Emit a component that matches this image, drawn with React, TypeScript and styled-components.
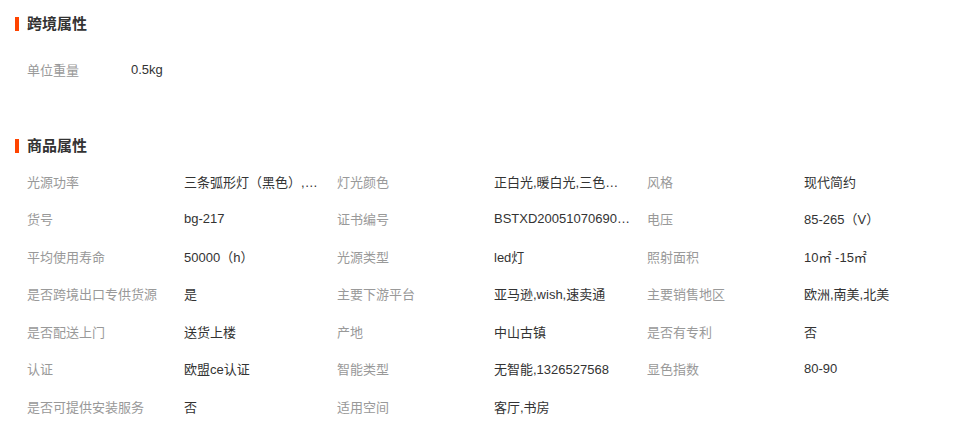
import React from 'react';
import styled, { createGlobalStyle } from 'styled-components';

const GlobalStyle = createGlobalStyle`
  body {
    margin: 0;
    background: #fff;
    font-family: "Liberation Sans", "Noto Sans CJK SC", sans-serif;
    font-size: 13px;
    color: #333;
  }
`;

const Page = styled.div`
  padding: 14px 15px;
`;

const Section = styled.section<{ $gap?: number }>`
  margin-bottom: ${(p) => p.$gap ?? 0}px;
`;

const SectionTitle = styled.h3`
  display: flex;
  align-items: center;
  gap: 8px;
  margin: 0;
  height: 20px;
  line-height: 20px;
  font-size: 15px;
  font-weight: bold;
  color: #333;

  &::before {
    content: '';
    width: 4px;
    height: 14px;
    background: #ff4400;
  }
`;

const AttrGrid = styled.div<{ $cols: number; $top: number; $label: number }>`
  display: grid;
  grid-template-columns: repeat(${(p) => p.$cols}, ${(p) => p.$label}px 153px);
  grid-auto-rows: 37.5px;
  padding: ${(p) => p.$top}px 0 0 12px;
  align-items: center;
`;

const Label = styled.div`
  color: #999;
  white-space: nowrap;
`;

const Value = styled.div`
  color: #333;
  max-width: 136px;
  white-space: nowrap;
  overflow: hidden;
  text-overflow: ellipsis;
`;

type Attr = [string, string];

const crossBorder: Attr[] = [['单位重量', '0.5kg']];

const product: Attr[] = [
  ['光源功率', '三条弧形灯（黑色）,三条弧形灯（白色）'],
  ['灯光颜色', '正白光,暖白光,三色变光'],
  ['风格', '现代简约'],
  ['货号', 'bg-217'],
  ['证书编号', 'BSTXD2005107069012345'],
  ['电压', '85-265（V）'],
  ['平均使用寿命', '50000（h）'],
  ['光源类型', 'led灯'],
  ['照射面积', '10㎡ -15㎡'],
  ['是否跨境出口专供货源', '是'],
  ['主要下游平台', '亚马逊,wish,速卖通'],
  ['主要销售地区', '欧洲,南美,北美'],
  ['是否配送上门', '送货上楼'],
  ['产地', '中山古镇'],
  ['是否有专利', '否'],
  ['认证', '欧盟ce认证'],
  ['智能类型', '无智能,1326527568'],
  ['显色指数', '80-90'],
  ['是否可提供安装服务', '否'],
  ['适用空间', '客厅,书房'],
];

const renderAttrs = (list: Attr[]) =>
  list.map(([k, v]) => (
    <React.Fragment key={k}>
      <Label>{k}</Label>
      <Value title={v}>{v}</Value>
    </React.Fragment>
  ));

const App: React.FC = () => (
  <>
    <GlobalStyle />
    <Page>
      <Section $gap={47}>
        <SectionTitle>跨境属性</SectionTitle>
        <AttrGrid $cols={1} $top={17} $label={104}>
          {renderAttrs(crossBorder)}
        </AttrGrid>
      </Section>
      <Section>
        <SectionTitle>商品属性</SectionTitle>
        <AttrGrid $cols={3} $top={7} $label={157}>
          {renderAttrs(product)}
        </AttrGrid>
      </Section>
    </Page>
  </>
);

export default App;
